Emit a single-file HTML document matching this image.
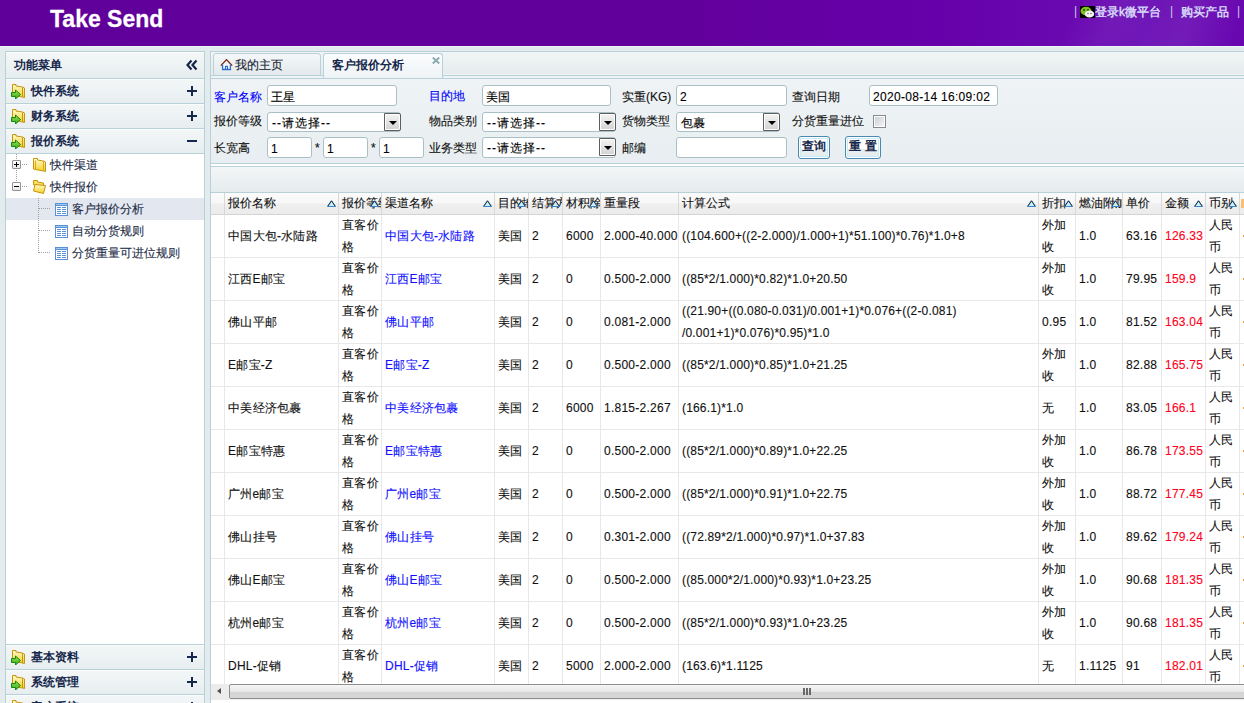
<!DOCTYPE html>
<html><head><meta charset="utf-8">
<style>
*{box-sizing:border-box}
html,body{margin:0;padding:0}
body{width:1244px;height:703px;overflow:hidden;position:relative;background:#e4ebee;font-family:"Liberation Sans",sans-serif;font-size:12px;color:#000;-webkit-text-stroke:0.12px currentColor}
.a{position:absolute}
#hdr{left:0;top:0;width:1244px;height:46px;background:linear-gradient(90deg,#60009a 0%,#62009c 55%,#6600aa 75%,#6a0ab2 88%,#6c12b6 92%,#6806b0 100%)}
#hdrline{left:0;top:46px;width:1244px;height:1px;background:#eef7f2}
#logo{left:50px;top:4px;font-size:23px;font-weight:bold;color:#fff;line-height:30px;-webkit-text-stroke:0.3px #fff}
.tl{top:3px;color:#dfe3ff;font-size:12px;line-height:16px;white-space:nowrap;-webkit-text-stroke:0.35px #dfe3ff}
/* sidebar */
#side{left:5px;top:51px;width:200px;height:660px;border:1px solid #b8d0d7;background:#fff;overflow:hidden}
.ptitle{left:0;top:0;width:198px;height:27px;background:linear-gradient(#f4f7f8,#e6edef);border-bottom:1px solid #b8d0d7;border-top:1px solid #fff}
.ptitle .t{position:absolute;left:8px;top:5px;font-weight:bold;color:#15274a;line-height:14px;-webkit-text-stroke:0}
.ahdr{left:0;width:198px;height:25px;background:linear-gradient(#f3f6f7,#e7eef0);border-bottom:1px solid #b8d0d7;border-top:1px solid #fbfcfc}
.ahdr .t{position:absolute;left:25px;top:4px;font-weight:bold;color:#15274a;line-height:14px;-webkit-text-stroke:0}
.ahdr svg{position:absolute;left:4px;top:3px}
.pm{position:absolute;left:181px;top:6px;width:10px;height:10px}
.pm:before{content:"";position:absolute;left:0;top:4px;width:10px;height:2px;background:#15274a}
.pm.plus:after{content:"";position:absolute;left:4px;top:0;width:2px;height:10px;background:#15274a}
#tree{left:0;top:102px;width:198px;height:491px;border-bottom:1px solid #b8d0d7;background:#fff}
.tr{position:absolute;left:0;width:198px;height:22px;line-height:22px;color:#1b2a45;white-space:nowrap}
.tr.sel{background:#e3e8f0}
.tr .t{position:absolute;top:0}
.vdot{position:absolute;width:1px;background:repeating-linear-gradient(#a0a0a0 0 1px,transparent 1px 2px)}
.hdot{position:absolute;height:1px;background:repeating-linear-gradient(90deg,#a0a0a0 0 1px,transparent 1px 2px)}
.ebox{position:absolute;width:9px;height:9px;border:1px solid #929292;background:linear-gradient(#fff,#e8e8e8);border-radius:1px}
.ebox:before{content:"";position:absolute;left:1px;top:3px;width:5px;height:1px;background:#000}
.ebox.plus:after{content:"";position:absolute;left:3px;top:1px;width:1px;height:5px;background:#000}
/* content */
#main{left:210px;top:51px;width:1040px;height:660px;border:1px solid #b8d0d7;background:#edf1f3;overflow:hidden}

#tabs{left:0;top:0;width:1040px;height:27px;border-bottom:1px solid #b8d0d7;background:linear-gradient(#f1f5f6,#e6eced 85%,#eef3f5 86%)}
#tabs:after{content:"";position:absolute;left:0;top:23px;width:100%;height:1px;background:#b8d0d7}
.tab{border:1px solid #b8d0d7;border-radius:3px 3px 0 0;background:linear-gradient(#f5f8f9,#e2e9ec)}
.tab.act{border-bottom:none;background:linear-gradient(#fbfcfd,#eef3f5)}
#form{left:0;top:27px;width:1040px;height:85px;border-bottom:1px solid #b8d0d7;background:linear-gradient(#eff3f5,#e8eef1)}
#form>*{position:absolute}
.lb{line-height:14px;white-space:nowrap;color:#101010}
.lb.blu{color:#0000ff}
.in{border:1px solid #aac0c7;border-radius:3px;background:#fff;overflow:hidden}
.in span{position:absolute;left:3px;top:4px;line-height:14px;font-size:12px;white-space:nowrap}
.in.sl{overflow:visible}
.in.sl span{top:3px;left:4px;letter-spacing:1px}
.in.sl i{position:absolute;right:-1px;top:0;width:17px;height:18px;border:1px solid #5e5e5e;border-radius:0 2px 2px 0;background:linear-gradient(#f4f4f4,#d2d2d2);box-shadow:inset 0 0 0 1px #fff}
.in.sl i:after{content:"";position:absolute;left:4px;top:7px;border-left:4px solid transparent;border-right:4px solid transparent;border-top:4px solid #000}
.cb{width:13px;height:13px;border:1px solid #8a8a8a;background:linear-gradient(135deg,#c8ced8,#f6f6f6);box-shadow:inset 0 0 0 1px #fff}
.btn{border:1px solid #4a88b0;border-radius:3px;background:linear-gradient(#fff 0,#fff 55%,#e9eef0 56%,#e6ecee 100%);box-shadow:inset 0 0 0 1px #fff,inset 0 0 0 2px #c6ecf8}
.btn span{position:absolute;left:0;right:0;top:2px;text-align:center;font-weight:bold;color:#15274a;line-height:14px;white-space:pre;-webkit-text-stroke:0}
#tb{left:0;top:112px;width:1040px;height:29px;border-top:2px solid #fff;border-bottom:1px solid #b8d0d7;background:linear-gradient(#f3f6f7,#e5ecee)}
#tb:before{content:"";position:absolute;left:0;top:0;width:100%;height:1px;background:#b8d0d7}
#gh{left:0;top:141px;width:1040px;height:22px;background:linear-gradient(#fbfbfb 0,#f7f7f7 48%,#efefef 52%,#ececec 100%);border-bottom:1px solid #d4d4d4}
.hc{position:absolute;top:0;height:21px;border-right:1px solid #d8d8d8;overflow:hidden;white-space:nowrap}
.hc span{position:absolute;left:3px;top:3px;line-height:14px;color:#111}
.hc .tri{position:absolute;right:1px;top:7px}
.ogh{width:3px;height:9px;background:#f8c070;top:6px!important;left:1px!important}
.ogd{width:3px;height:2px;background:#f0a030;margin-left:0}

#gb{left:0;top:163px;width:1040px;height:469px;background:#fff;overflow:hidden}
.rw{position:absolute;left:0;width:1040px;height:43px;border-bottom:1px solid #e8e8e8}
.c{position:absolute;border-right:1px solid #e8e8e8;overflow:hidden;display:flex;align-items:center;padding-left:3px;letter-spacing:0.25px;line-height:22px;color:#111}
.c span{display:block;white-space:nowrap}
.c.fm{letter-spacing:0.17px}
.c.lk{color:#1010ff}
.c.rd{color:#ff0020}
.c.og{color:#f0a030}
#sb{left:0;top:632px;width:1040px;height:16px;background:#efefef}
#sbl{left:0;top:0;width:18px;height:16px;background:#ececec}
#sbl i{position:absolute;left:6px;top:4px;border-top:3.5px solid transparent;border-bottom:3.5px solid transparent;border-right:4px solid #505050}
#sbt{left:18px;top:0;width:1040px;height:15px;border:1px solid #8e8e8e;border-radius:2px;background:linear-gradient(#f6f6f6,#e8e8e8 50%,#d4d4d4 51%,#d8d8d8)}
#sbt i{position:absolute;left:573px;top:3px;width:8px;height:7px;background:repeating-linear-gradient(90deg,#555 0 2px,transparent 2px 3px);opacity:0.85}
#bot{left:0;top:648px;width:1040px;height:20px;background:#fff}
</style></head>
<body>
<div id="hdr" class="a"></div>
<div id="hdrline" class="a"></div>
<div class="a" style="left:1000px;top:0;width:244px;height:46px;background:linear-gradient(115deg,rgba(255,255,255,0) 30%,rgba(255,255,255,0.05) 45%,rgba(255,255,255,0.02) 60%,rgba(255,255,255,0.06) 75%,rgba(255,255,255,0) 95%)"></div>
<div id="logo" class="a">Take Send</div>
<div class="a tl" style="left:1074px;-webkit-text-stroke:0;color:#c8c8f0">|</div>
<svg class="a" style="left:1080px;top:6px" width="15" height="12" viewBox="0 0 15 12">
 <rect width="15" height="12" fill="#000"/>
 <ellipse cx="6" cy="5" rx="5.5" ry="4.3" fill="#7ec31f"/>
 <circle cx="4" cy="4" r="0.9" fill="#1e3a00"/><circle cx="8" cy="4" r="0.9" fill="#1e3a00"/>
 <ellipse cx="9.5" cy="8" rx="4.7" ry="3.6" fill="#f4f4f4"/>
 <circle cx="8" cy="7.5" r="0.7" fill="#555"/><circle cx="11" cy="7.5" r="0.7" fill="#555"/>
</svg>
<div class="a tl" style="left:1095px;top:4px">登录k微平台</div>
<div class="a tl" style="left:1170px;-webkit-text-stroke:0;color:#c8c8f0">|</div>
<div class="a tl" style="left:1181px;top:4px">购买产品</div>
<div class="a tl" style="left:1237px;-webkit-text-stroke:0;color:#c8c8f0">|</div>

<div id="side" class="a">
  <div class="ptitle a"><span class="t">功能菜单</span>
    <svg class="a" style="left:180px;top:6px" width="12" height="12" viewBox="0 0 12 12"><path d="M5.5 1.5 L1.5 6 L5.5 10.5 M10.5 1.5 L6.5 6 L10.5 10.5" stroke="#15274a" stroke-width="2.2" fill="none"/></svg>
  </div>
  <div class="ahdr a" style="top:27px"><svg width="16" height="16" viewBox="0 0 16 16"><use href="#fld"/></svg><span class="t">快件系统</span><span class="pm plus"></span></div>
  <div class="ahdr a" style="top:52px"><svg width="16" height="16" viewBox="0 0 16 16"><use href="#fld"/></svg><span class="t">财务系统</span><span class="pm plus"></span></div>
  <div class="ahdr a" style="top:77px"><svg width="16" height="16" viewBox="0 0 16 16"><use href="#fld"/></svg><span class="t">报价系统</span><span class="pm"></span></div>
  <div id="tree" class="a">
    <div class="vdot" style="left:10px;top:0;height:6px"></div>
    <div class="vdot" style="left:10px;top:16px;height:12px"></div>
    <div class="ebox plus" style="left:6px;top:6px"></div>
    <div class="hdot" style="left:16px;top:10px;width:6px"></div>
    <div class="ebox" style="left:6px;top:28px"></div>
    <div class="hdot" style="left:16px;top:32px;width:6px"></div>
    <svg class="a" style="left:27px;top:4px" width="14" height="15" viewBox="0 0 14 15"><use href="#fc"/></svg>
    <div class="tr" style="top:0"><span class="t" style="left:44px">快件渠道</span></div>
    <svg class="a" style="left:27px;top:26px" width="14" height="15" viewBox="0 0 14 15"><use href="#fo"/></svg>
    <div class="tr" style="top:22px"><span class="t" style="left:44px">快件报价</span></div>
    <div class="tr sel" style="top:44px"></div>
    <div class="vdot" style="left:32px;top:44px;height:55px"></div>
    <div class="hdot" style="left:33px;top:54px;width:11px"></div>
    <div class="hdot" style="left:33px;top:76px;width:11px"></div>
    <div class="hdot" style="left:33px;top:98px;width:11px"></div>
    <svg class="a" style="left:49px;top:49px" width="13" height="13" viewBox="0 0 13 13"><use href="#pg"/></svg>
    <div class="tr" style="top:44px;background:none"><span class="t" style="left:66px">客户报价分析</span></div>
    <svg class="a" style="left:49px;top:71px" width="13" height="13" viewBox="0 0 13 13"><use href="#pg"/></svg>
    <div class="tr" style="top:66px"><span class="t" style="left:66px">自动分货规则</span></div>
    <svg class="a" style="left:49px;top:93px" width="13" height="13" viewBox="0 0 13 13"><use href="#pg"/></svg>
    <div class="tr" style="top:88px"><span class="t" style="left:66px">分货重量可进位规则</span></div>
  </div>
  <div class="ahdr a" style="top:593px"><svg width="16" height="16" viewBox="0 0 16 16"><use href="#fld"/></svg><span class="t">基本资料</span><span class="pm plus"></span></div>
  <div class="ahdr a" style="top:618px"><svg width="16" height="16" viewBox="0 0 16 16"><use href="#fld"/></svg><span class="t">系统管理</span><span class="pm plus"></span></div>
  <div class="ahdr a" style="top:643px"><svg width="16" height="16" viewBox="0 0 16 16"><use href="#fld"/></svg><span class="t">客户系统</span><span class="pm plus"></span></div>
</div>

<div id="main" class="a">
  <div class="a" id="tabs"></div>
  <div class="a tab" style="left:2px;top:1px;width:108px;height:23px">
    <svg class="a" style="left:6px;top:4px" width="13" height="13" viewBox="0 0 13 13"><path d="M0.8 7.6 L6.5 1.6 L12.2 7.6" stroke="#7a1c10" stroke-width="1.3" fill="none"/><path d="M2.6 6.5 V11.5 H10.4 V6.5" stroke="#2f6cc8" stroke-width="1.3" fill="#fff"/><path d="M5.5 11.5 V8.3 H7.5 V11.5" stroke="#2f6cc8" stroke-width="1.2" fill="none"/></svg>
    <span class="a" style="left:21px;top:4px;color:#15202f;line-height:14px">我的主页</span>
  </div>
  <div class="a tab act" style="left:112px;top:1px;width:120px;height:25px">
    <span class="a" style="left:8px;top:4px;font-weight:bold;color:#15274a;line-height:14px;-webkit-text-stroke:0">客户报价分析</span>
    <svg class="a" style="left:108px;top:3px" width="8" height="7" viewBox="0 0 8 7"><path d="M0.8 0.5 L7.2 6.5 M7.2 0.5 L0.8 6.5" stroke="#8aaab2" stroke-width="1.9"/></svg>
  </div>
  <div class="a" id="form">
    <span class="lb blu" style="left:3px;top:11px">客户名称</span>
    <div class="in" style="left:56px;top:6px;width:130px;height:21px"><span>王星</span></div>
    <span class="lb blu" style="left:218px;top:10px">目的地</span>
    <div class="in" style="left:271px;top:6px;width:129px;height:21px"><span>美国</span></div>
    <span class="lb" style="left:411px;top:11px">实重(KG)</span>
    <div class="in" style="left:465px;top:6px;width:111px;height:21px"><span>2</span></div>
    <span class="lb" style="left:581px;top:11px">查询日期</span>
    <div class="in" style="left:658px;top:6px;width:129px;height:21px"><span style="letter-spacing:0.3px">2020-08-14 16:09:02</span></div>

    <span class="lb" style="left:3px;top:35px">报价等级</span>
    <div class="in sl" style="left:56px;top:33px;width:134px;height:20px"><span>--请选择--</span><i></i></div>
    <span class="lb" style="left:218px;top:35px">物品类别</span>
    <div class="in sl" style="left:271px;top:33px;width:134px;height:20px"><span>--请选择--</span><i></i></div>
    <span class="lb" style="left:411px;top:35px">货物类型</span>
    <div class="in sl" style="left:465px;top:33px;width:104px;height:20px"><span style="letter-spacing:0">包裹</span><i></i></div>
    <span class="lb" style="left:581px;top:35px">分货重量进位</span>
    <div class="cb" style="left:662px;top:36px"></div>

    <span class="lb" style="left:3px;top:62px">长宽高</span>
    <div class="in" style="left:56px;top:58px;width:45px;height:21px"><span>1</span></div>
    <span class="lb" style="left:104px;top:62px">*</span>
    <div class="in" style="left:112px;top:58px;width:45px;height:21px"><span>1</span></div>
    <span class="lb" style="left:160px;top:62px">*</span>
    <div class="in" style="left:168px;top:58px;width:45px;height:21px"><span>1</span></div>
    <span class="lb" style="left:218px;top:62px">业务类型</span>
    <div class="in sl" style="left:271px;top:58px;width:134px;height:21px"><span>--请选择--</span><i></i></div>
    <span class="lb" style="left:411px;top:62px">邮编</span>
    <div class="in" style="left:465px;top:58px;width:111px;height:21px"></div>
    <div class="btn" style="left:587px;top:57px;width:32px;height:23px"><span>查询</span></div>
    <div class="btn" style="left:634px;top:57px;width:36px;height:23px"><span>重 置</span></div>
  </div>
  <div class="a" id="tb"></div>
  <div class="a" id="gh">
    <div class="hc" style="left:0px;width:14px"></div>
    <div class="hc" style="left:14px;width:114px"><span>报价名称</span><svg class="tri" width="10" height="8" viewBox="0 0 10 8"><use href="#tri"/></svg></div>
    <div class="hc" style="left:128px;width:43px"><span>报价等级</span><svg class="tri" width="10" height="8" viewBox="0 0 10 8"><use href="#tri"/></svg></div>
    <div class="hc" style="left:171px;width:113px"><span>渠道名称</span><svg class="tri" width="10" height="8" viewBox="0 0 10 8"><use href="#tri"/></svg></div>
    <div class="hc" style="left:284px;width:34px"><span>目的地</span><svg class="tri" width="10" height="8" viewBox="0 0 10 8"><use href="#tri"/></svg></div>
    <div class="hc" style="left:318px;width:34px"><span>结算方式</span><svg class="tri" width="10" height="8" viewBox="0 0 10 8"><use href="#tri"/></svg></div>
    <div class="hc" style="left:352px;width:38px"><span>材积除</span><svg class="tri" width="10" height="8" viewBox="0 0 10 8"><use href="#tri"/></svg></div>
    <div class="hc" style="left:390px;width:78px"><span>重量段</span></div>
    <div class="hc" style="left:468px;width:360px"><span>计算公式</span><svg class="tri" width="10" height="8" viewBox="0 0 10 8"><use href="#tri"/></svg></div>
    <div class="hc" style="left:828px;width:37px"><span>折扣</span><svg class="tri" width="10" height="8" viewBox="0 0 10 8"><use href="#tri"/></svg></div>
    <div class="hc" style="left:865px;width:47px"><span>燃油附加</span><svg class="tri" width="10" height="8" viewBox="0 0 10 8"><use href="#tri"/></svg></div>
    <div class="hc" style="left:912px;width:39px"><span>单价</span></div>
    <div class="hc" style="left:951px;width:44px"><span>金额</span><svg class="tri" width="10" height="8" viewBox="0 0 10 8"><use href="#tri"/></svg></div>
    <div class="hc" style="left:995px;width:34px"><span>币别</span><svg class="tri" width="10" height="8" viewBox="0 0 10 8"><use href="#tri"/></svg></div>
    <div class="hc" style="left:1029px;width:51px"><span class="ogh"></span></div>
  </div>
  <div class="a" id="gb">
    <div class="rw" style="top:0px"></div>
    <div class="c" style="left:0px;top:0px;width:14px;height:42px"></div>
    <div class="c" style="left:14px;top:0px;width:114px;height:42px"><span>中国大包-水陆路</span></div>
    <div class="c" style="left:128px;top:0px;width:43px;height:42px"><span>直客价<br>格</span></div>
    <div class="c lk" style="left:171px;top:0px;width:113px;height:42px"><span>中国大包-水陆路</span></div>
    <div class="c" style="left:284px;top:0px;width:34px;height:42px"><span>美国</span></div>
    <div class="c" style="left:318px;top:0px;width:34px;height:42px"><span>2</span></div>
    <div class="c" style="left:352px;top:0px;width:38px;height:42px"><span>6000</span></div>
    <div class="c" style="left:390px;top:0px;width:78px;height:42px"><span>2.000-40.000</span></div>
    <div class="c fm" style="left:468px;top:0px;width:360px;height:42px"><span>((104.600+((2-2.000)/1.000+1)*51.100)*0.76)*1.0+8</span></div>
    <div class="c" style="left:828px;top:0px;width:37px;height:42px"><span>外加<br>收</span></div>
    <div class="c" style="left:865px;top:0px;width:47px;height:42px"><span>1.0</span></div>
    <div class="c" style="left:912px;top:0px;width:39px;height:42px"><span>63.16</span></div>
    <div class="c rd" style="left:951px;top:0px;width:44px;height:42px"><span>126.33</span></div>
    <div class="c" style="left:995px;top:0px;width:34px;height:42px"><span>人民<br>币</span></div>
    <div class="c og" style="left:1029px;top:0px;width:51px;height:42px"><span class="ogd"></span></div>
    <div class="rw" style="top:43px"></div>
    <div class="c" style="left:0px;top:43px;width:14px;height:42px"></div>
    <div class="c" style="left:14px;top:43px;width:114px;height:42px"><span>江西E邮宝</span></div>
    <div class="c" style="left:128px;top:43px;width:43px;height:42px"><span>直客价<br>格</span></div>
    <div class="c lk" style="left:171px;top:43px;width:113px;height:42px"><span>江西E邮宝</span></div>
    <div class="c" style="left:284px;top:43px;width:34px;height:42px"><span>美国</span></div>
    <div class="c" style="left:318px;top:43px;width:34px;height:42px"><span>2</span></div>
    <div class="c" style="left:352px;top:43px;width:38px;height:42px"><span>0</span></div>
    <div class="c" style="left:390px;top:43px;width:78px;height:42px"><span>0.500-2.000</span></div>
    <div class="c fm" style="left:468px;top:43px;width:360px;height:42px"><span>((85*2/1.000)*0.82)*1.0+20.50</span></div>
    <div class="c" style="left:828px;top:43px;width:37px;height:42px"><span>外加<br>收</span></div>
    <div class="c" style="left:865px;top:43px;width:47px;height:42px"><span>1.0</span></div>
    <div class="c" style="left:912px;top:43px;width:39px;height:42px"><span>79.95</span></div>
    <div class="c rd" style="left:951px;top:43px;width:44px;height:42px"><span>159.9</span></div>
    <div class="c" style="left:995px;top:43px;width:34px;height:42px"><span>人民<br>币</span></div>
    <div class="c og" style="left:1029px;top:43px;width:51px;height:42px"><span class="ogd"></span></div>
    <div class="rw" style="top:86px"></div>
    <div class="c" style="left:0px;top:86px;width:14px;height:42px"></div>
    <div class="c" style="left:14px;top:86px;width:114px;height:42px"><span>佛山平邮</span></div>
    <div class="c" style="left:128px;top:86px;width:43px;height:42px"><span>直客价<br>格</span></div>
    <div class="c lk" style="left:171px;top:86px;width:113px;height:42px"><span>佛山平邮</span></div>
    <div class="c" style="left:284px;top:86px;width:34px;height:42px"><span>美国</span></div>
    <div class="c" style="left:318px;top:86px;width:34px;height:42px"><span>2</span></div>
    <div class="c" style="left:352px;top:86px;width:38px;height:42px"><span>0</span></div>
    <div class="c" style="left:390px;top:86px;width:78px;height:42px"><span>0.081-2.000</span></div>
    <div class="c fm" style="left:468px;top:86px;width:360px;height:42px"><span>((21.90+((0.080-0.031)/0.001+1)*0.076+((2-0.081)<br>/0.001+1)*0.076)*0.95)*1.0</span></div>
    <div class="c" style="left:828px;top:86px;width:37px;height:42px"><span>0.95</span></div>
    <div class="c" style="left:865px;top:86px;width:47px;height:42px"><span>1.0</span></div>
    <div class="c" style="left:912px;top:86px;width:39px;height:42px"><span>81.52</span></div>
    <div class="c rd" style="left:951px;top:86px;width:44px;height:42px"><span>163.04</span></div>
    <div class="c" style="left:995px;top:86px;width:34px;height:42px"><span>人民<br>币</span></div>
    <div class="c og" style="left:1029px;top:86px;width:51px;height:42px"><span class="ogd"></span></div>
    <div class="rw" style="top:129px"></div>
    <div class="c" style="left:0px;top:129px;width:14px;height:42px"></div>
    <div class="c" style="left:14px;top:129px;width:114px;height:42px"><span>E邮宝-Z</span></div>
    <div class="c" style="left:128px;top:129px;width:43px;height:42px"><span>直客价<br>格</span></div>
    <div class="c lk" style="left:171px;top:129px;width:113px;height:42px"><span>E邮宝-Z</span></div>
    <div class="c" style="left:284px;top:129px;width:34px;height:42px"><span>美国</span></div>
    <div class="c" style="left:318px;top:129px;width:34px;height:42px"><span>2</span></div>
    <div class="c" style="left:352px;top:129px;width:38px;height:42px"><span>0</span></div>
    <div class="c" style="left:390px;top:129px;width:78px;height:42px"><span>0.500-2.000</span></div>
    <div class="c fm" style="left:468px;top:129px;width:360px;height:42px"><span>((85*2/1.000)*0.85)*1.0+21.25</span></div>
    <div class="c" style="left:828px;top:129px;width:37px;height:42px"><span>外加<br>收</span></div>
    <div class="c" style="left:865px;top:129px;width:47px;height:42px"><span>1.0</span></div>
    <div class="c" style="left:912px;top:129px;width:39px;height:42px"><span>82.88</span></div>
    <div class="c rd" style="left:951px;top:129px;width:44px;height:42px"><span>165.75</span></div>
    <div class="c" style="left:995px;top:129px;width:34px;height:42px"><span>人民<br>币</span></div>
    <div class="c og" style="left:1029px;top:129px;width:51px;height:42px"><span class="ogd"></span></div>
    <div class="rw" style="top:172px"></div>
    <div class="c" style="left:0px;top:172px;width:14px;height:42px"></div>
    <div class="c" style="left:14px;top:172px;width:114px;height:42px"><span>中美经济包裹</span></div>
    <div class="c" style="left:128px;top:172px;width:43px;height:42px"><span>直客价<br>格</span></div>
    <div class="c lk" style="left:171px;top:172px;width:113px;height:42px"><span>中美经济包裹</span></div>
    <div class="c" style="left:284px;top:172px;width:34px;height:42px"><span>美国</span></div>
    <div class="c" style="left:318px;top:172px;width:34px;height:42px"><span>2</span></div>
    <div class="c" style="left:352px;top:172px;width:38px;height:42px"><span>6000</span></div>
    <div class="c" style="left:390px;top:172px;width:78px;height:42px"><span>1.815-2.267</span></div>
    <div class="c fm" style="left:468px;top:172px;width:360px;height:42px"><span>(166.1)*1.0</span></div>
    <div class="c" style="left:828px;top:172px;width:37px;height:42px"><span>无</span></div>
    <div class="c" style="left:865px;top:172px;width:47px;height:42px"><span>1.0</span></div>
    <div class="c" style="left:912px;top:172px;width:39px;height:42px"><span>83.05</span></div>
    <div class="c rd" style="left:951px;top:172px;width:44px;height:42px"><span>166.1</span></div>
    <div class="c" style="left:995px;top:172px;width:34px;height:42px"><span>人民<br>币</span></div>
    <div class="c og" style="left:1029px;top:172px;width:51px;height:42px"><span class="ogd"></span></div>
    <div class="rw" style="top:215px"></div>
    <div class="c" style="left:0px;top:215px;width:14px;height:42px"></div>
    <div class="c" style="left:14px;top:215px;width:114px;height:42px"><span>E邮宝特惠</span></div>
    <div class="c" style="left:128px;top:215px;width:43px;height:42px"><span>直客价<br>格</span></div>
    <div class="c lk" style="left:171px;top:215px;width:113px;height:42px"><span>E邮宝特惠</span></div>
    <div class="c" style="left:284px;top:215px;width:34px;height:42px"><span>美国</span></div>
    <div class="c" style="left:318px;top:215px;width:34px;height:42px"><span>2</span></div>
    <div class="c" style="left:352px;top:215px;width:38px;height:42px"><span>0</span></div>
    <div class="c" style="left:390px;top:215px;width:78px;height:42px"><span>0.500-2.000</span></div>
    <div class="c fm" style="left:468px;top:215px;width:360px;height:42px"><span>((85*2/1.000)*0.89)*1.0+22.25</span></div>
    <div class="c" style="left:828px;top:215px;width:37px;height:42px"><span>外加<br>收</span></div>
    <div class="c" style="left:865px;top:215px;width:47px;height:42px"><span>1.0</span></div>
    <div class="c" style="left:912px;top:215px;width:39px;height:42px"><span>86.78</span></div>
    <div class="c rd" style="left:951px;top:215px;width:44px;height:42px"><span>173.55</span></div>
    <div class="c" style="left:995px;top:215px;width:34px;height:42px"><span>人民<br>币</span></div>
    <div class="c og" style="left:1029px;top:215px;width:51px;height:42px"><span class="ogd"></span></div>
    <div class="rw" style="top:258px"></div>
    <div class="c" style="left:0px;top:258px;width:14px;height:42px"></div>
    <div class="c" style="left:14px;top:258px;width:114px;height:42px"><span>广州e邮宝</span></div>
    <div class="c" style="left:128px;top:258px;width:43px;height:42px"><span>直客价<br>格</span></div>
    <div class="c lk" style="left:171px;top:258px;width:113px;height:42px"><span>广州e邮宝</span></div>
    <div class="c" style="left:284px;top:258px;width:34px;height:42px"><span>美国</span></div>
    <div class="c" style="left:318px;top:258px;width:34px;height:42px"><span>2</span></div>
    <div class="c" style="left:352px;top:258px;width:38px;height:42px"><span>0</span></div>
    <div class="c" style="left:390px;top:258px;width:78px;height:42px"><span>0.500-2.000</span></div>
    <div class="c fm" style="left:468px;top:258px;width:360px;height:42px"><span>((85*2/1.000)*0.91)*1.0+22.75</span></div>
    <div class="c" style="left:828px;top:258px;width:37px;height:42px"><span>外加<br>收</span></div>
    <div class="c" style="left:865px;top:258px;width:47px;height:42px"><span>1.0</span></div>
    <div class="c" style="left:912px;top:258px;width:39px;height:42px"><span>88.72</span></div>
    <div class="c rd" style="left:951px;top:258px;width:44px;height:42px"><span>177.45</span></div>
    <div class="c" style="left:995px;top:258px;width:34px;height:42px"><span>人民<br>币</span></div>
    <div class="c og" style="left:1029px;top:258px;width:51px;height:42px"><span class="ogd"></span></div>
    <div class="rw" style="top:301px"></div>
    <div class="c" style="left:0px;top:301px;width:14px;height:42px"></div>
    <div class="c" style="left:14px;top:301px;width:114px;height:42px"><span>佛山挂号</span></div>
    <div class="c" style="left:128px;top:301px;width:43px;height:42px"><span>直客价<br>格</span></div>
    <div class="c lk" style="left:171px;top:301px;width:113px;height:42px"><span>佛山挂号</span></div>
    <div class="c" style="left:284px;top:301px;width:34px;height:42px"><span>美国</span></div>
    <div class="c" style="left:318px;top:301px;width:34px;height:42px"><span>2</span></div>
    <div class="c" style="left:352px;top:301px;width:38px;height:42px"><span>0</span></div>
    <div class="c" style="left:390px;top:301px;width:78px;height:42px"><span>0.301-2.000</span></div>
    <div class="c fm" style="left:468px;top:301px;width:360px;height:42px"><span>((72.89*2/1.000)*0.97)*1.0+37.83</span></div>
    <div class="c" style="left:828px;top:301px;width:37px;height:42px"><span>外加<br>收</span></div>
    <div class="c" style="left:865px;top:301px;width:47px;height:42px"><span>1.0</span></div>
    <div class="c" style="left:912px;top:301px;width:39px;height:42px"><span>89.62</span></div>
    <div class="c rd" style="left:951px;top:301px;width:44px;height:42px"><span>179.24</span></div>
    <div class="c" style="left:995px;top:301px;width:34px;height:42px"><span>人民<br>币</span></div>
    <div class="c og" style="left:1029px;top:301px;width:51px;height:42px"><span class="ogd"></span></div>
    <div class="rw" style="top:344px"></div>
    <div class="c" style="left:0px;top:344px;width:14px;height:42px"></div>
    <div class="c" style="left:14px;top:344px;width:114px;height:42px"><span>佛山E邮宝</span></div>
    <div class="c" style="left:128px;top:344px;width:43px;height:42px"><span>直客价<br>格</span></div>
    <div class="c lk" style="left:171px;top:344px;width:113px;height:42px"><span>佛山E邮宝</span></div>
    <div class="c" style="left:284px;top:344px;width:34px;height:42px"><span>美国</span></div>
    <div class="c" style="left:318px;top:344px;width:34px;height:42px"><span>2</span></div>
    <div class="c" style="left:352px;top:344px;width:38px;height:42px"><span>0</span></div>
    <div class="c" style="left:390px;top:344px;width:78px;height:42px"><span>0.500-2.000</span></div>
    <div class="c fm" style="left:468px;top:344px;width:360px;height:42px"><span>((85.000*2/1.000)*0.93)*1.0+23.25</span></div>
    <div class="c" style="left:828px;top:344px;width:37px;height:42px"><span>外加<br>收</span></div>
    <div class="c" style="left:865px;top:344px;width:47px;height:42px"><span>1.0</span></div>
    <div class="c" style="left:912px;top:344px;width:39px;height:42px"><span>90.68</span></div>
    <div class="c rd" style="left:951px;top:344px;width:44px;height:42px"><span>181.35</span></div>
    <div class="c" style="left:995px;top:344px;width:34px;height:42px"><span>人民<br>币</span></div>
    <div class="c og" style="left:1029px;top:344px;width:51px;height:42px"><span class="ogd"></span></div>
    <div class="rw" style="top:387px"></div>
    <div class="c" style="left:0px;top:387px;width:14px;height:42px"></div>
    <div class="c" style="left:14px;top:387px;width:114px;height:42px"><span>杭州e邮宝</span></div>
    <div class="c" style="left:128px;top:387px;width:43px;height:42px"><span>直客价<br>格</span></div>
    <div class="c lk" style="left:171px;top:387px;width:113px;height:42px"><span>杭州e邮宝</span></div>
    <div class="c" style="left:284px;top:387px;width:34px;height:42px"><span>美国</span></div>
    <div class="c" style="left:318px;top:387px;width:34px;height:42px"><span>2</span></div>
    <div class="c" style="left:352px;top:387px;width:38px;height:42px"><span>0</span></div>
    <div class="c" style="left:390px;top:387px;width:78px;height:42px"><span>0.500-2.000</span></div>
    <div class="c fm" style="left:468px;top:387px;width:360px;height:42px"><span>((85*2/1.000)*0.93)*1.0+23.25</span></div>
    <div class="c" style="left:828px;top:387px;width:37px;height:42px"><span>外加<br>收</span></div>
    <div class="c" style="left:865px;top:387px;width:47px;height:42px"><span>1.0</span></div>
    <div class="c" style="left:912px;top:387px;width:39px;height:42px"><span>90.68</span></div>
    <div class="c rd" style="left:951px;top:387px;width:44px;height:42px"><span>181.35</span></div>
    <div class="c" style="left:995px;top:387px;width:34px;height:42px"><span>人民<br>币</span></div>
    <div class="c og" style="left:1029px;top:387px;width:51px;height:42px"><span class="ogd"></span></div>
    <div class="rw" style="top:430px"></div>
    <div class="c" style="left:0px;top:430px;width:14px;height:42px"></div>
    <div class="c" style="left:14px;top:430px;width:114px;height:42px"><span>DHL-促销</span></div>
    <div class="c" style="left:128px;top:430px;width:43px;height:42px"><span>直客价<br>格</span></div>
    <div class="c lk" style="left:171px;top:430px;width:113px;height:42px"><span>DHL-促销</span></div>
    <div class="c" style="left:284px;top:430px;width:34px;height:42px"><span>美国</span></div>
    <div class="c" style="left:318px;top:430px;width:34px;height:42px"><span>2</span></div>
    <div class="c" style="left:352px;top:430px;width:38px;height:42px"><span>5000</span></div>
    <div class="c" style="left:390px;top:430px;width:78px;height:42px"><span>2.000-2.000</span></div>
    <div class="c fm" style="left:468px;top:430px;width:360px;height:42px"><span>(163.6)*1.1125</span></div>
    <div class="c" style="left:828px;top:430px;width:37px;height:42px"><span>无</span></div>
    <div class="c" style="left:865px;top:430px;width:47px;height:42px"><span>1.1125</span></div>
    <div class="c" style="left:912px;top:430px;width:39px;height:42px"><span>91</span></div>
    <div class="c rd" style="left:951px;top:430px;width:44px;height:42px"><span>182.01</span></div>
    <div class="c" style="left:995px;top:430px;width:34px;height:42px"><span>人民<br>币</span></div>
    <div class="c og" style="left:1029px;top:430px;width:51px;height:42px"><span class="ogd"></span></div>
  </div>
  <div class="a" id="sb">
    <div class="a" id="sbl"><i></i></div>
    <div class="a" id="sbt"><i></i></div>
  </div>
  <div class="a" id="bot"></div>
</div>

<svg width="0" height="0" style="position:absolute">
 <defs>
  <linearGradient id="gy" x1="0" y1="0" x2="0" y2="1"><stop offset="0" stop-color="#fffbd0"/><stop offset="1" stop-color="#f5d020"/></linearGradient>
  <linearGradient id="gg" x1="0" y1="0" x2="0" y2="1"><stop offset="0" stop-color="#9ee05a"/><stop offset="1" stop-color="#3aa818"/></linearGradient>
  <g id="fld">
   <path d="M2.5 1.5 H6 V3 L12.5 4 L14.5 5 V14.5 L12.5 14 L2.5 12 Z" fill="url(#gy)" stroke="#c8940c" stroke-width="1"/>
   <path d="M12.5 4.5 V14" stroke="#c8940c" stroke-width="1"/>
   <path d="M1.5 9.5 H5.5 V7 L10.5 11.5 L5.5 16 V13.5 H1.5 Z" fill="url(#gg)" stroke="#0f8a10" stroke-width="1"/>
  </g>
  <g id="fc">
   <path d="M0.5 0.5 H4.5 V2 L10.5 3 L12.5 4 V13.5 L10.5 13 L2.5 11.5 L0.5 11 Z" fill="url(#gy)" stroke="#c8940c" stroke-width="1"/>
   <path d="M2.5 2.5 V11 M10.5 3.5 V13" stroke="#d8a820" stroke-width="1"/>
  </g>
  <g id="fo">
   <path d="M0.5 0.5 H4.5 V2 L10.5 3 V6 L0.5 5 Z" fill="#f8e060" stroke="#c8940c" stroke-width="1"/>
   <path d="M0.5 11 L2 4.5 L12.5 5.5 L10.5 13.5 Z" fill="url(#gy)" stroke="#c8940c" stroke-width="1"/>
  </g>
  <g id="pg">
   <rect x="0.5" y="0.5" width="12" height="12" fill="#fff" stroke="#5a90d8"/>
   <rect x="1" y="1" width="11" height="1" fill="#9ccbf2"/>
   <rect x="1" y="2" width="11" height="1" fill="#5a90d8"/>
   <g fill="#5a90d8"><rect x="2" y="4" width="4" height="1"/><rect x="7" y="4" width="4" height="1"/><rect x="2" y="6" width="4" height="1"/><rect x="7" y="6" width="4" height="1"/><rect x="2" y="8" width="4" height="1"/><rect x="7" y="8" width="4" height="1"/><rect x="2" y="10" width="4" height="1"/><rect x="7" y="10" width="4" height="1"/></g>
  </g>
  <g id="tri"><path d="M0.5 6.5 L4.5 0.8 L8.5 6.5 Z" fill="#c6effc" stroke="#3d86c8" stroke-width="1"/><path d="M0.8 6.2 L4.5 0.8 L8.2 6.2" fill="none" stroke="#1a2530" stroke-width="0.9"/></g>
 </defs>
</svg>
</body></html>
